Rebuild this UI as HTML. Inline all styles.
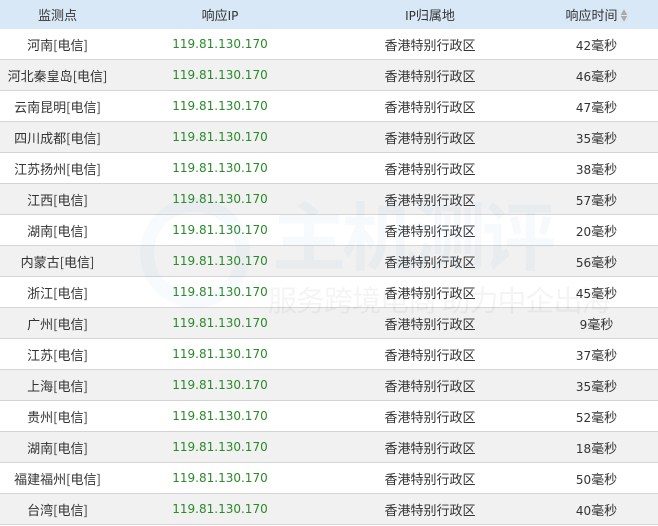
<!DOCTYPE html><html><head><meta charset="utf-8"><style>
body{margin:0;width:658px;height:526px;overflow:hidden;background:#fff;font-family:"Noto Sans CJK SC",sans-serif;font-size:13px;color:#333;position:relative}
table{border-collapse:collapse;width:658px;table-layout:fixed}
th{background:#d9e8f7;height:29px;font-weight:normal;color:#333;padding:0}
td{height:30px;border-bottom:1px solid #d4d4d4;text-align:center;padding:0}
tr:nth-child(even) td{background:#f1f1f1}
td.ip{color:#2a8a2a;font-family:"DejaVu Sans",sans-serif;font-size:12px}
.n{font-family:"DejaVu Sans",sans-serif;font-size:12px}
.wm{position:absolute;pointer-events:none}
</style></head><body>
<table>
<colgroup><col style="width:115px"><col style="width:210px"><col style="width:210px"><col style="width:123px"></colgroup>
<thead><tr><th>监测点</th><th>响应<span class="n">IP</span></th><th><span class="n">IP</span>归属地</th><th>响应时间 <span style="color:#aaa;font-size:7px;display:inline-block;line-height:6px;vertical-align:middle">&#9650;<br>&#9660;</span></th></tr></thead>
<tbody>
<tr><td>河南[电信]</td><td class="ip">119.81.130.170</td><td>香港特别行政区</td><td><span class="n">42</span>毫秒</td></tr>
<tr><td>河北秦皇岛[电信]</td><td class="ip">119.81.130.170</td><td>香港特别行政区</td><td><span class="n">46</span>毫秒</td></tr>
<tr><td>云南昆明[电信]</td><td class="ip">119.81.130.170</td><td>香港特别行政区</td><td><span class="n">47</span>毫秒</td></tr>
<tr><td>四川成都[电信]</td><td class="ip">119.81.130.170</td><td>香港特别行政区</td><td><span class="n">35</span>毫秒</td></tr>
<tr><td>江苏扬州[电信]</td><td class="ip">119.81.130.170</td><td>香港特别行政区</td><td><span class="n">38</span>毫秒</td></tr>
<tr><td>江西[电信]</td><td class="ip">119.81.130.170</td><td>香港特别行政区</td><td><span class="n">57</span>毫秒</td></tr>
<tr><td>湖南[电信]</td><td class="ip">119.81.130.170</td><td>香港特别行政区</td><td><span class="n">20</span>毫秒</td></tr>
<tr><td>内蒙古[电信]</td><td class="ip">119.81.130.170</td><td>香港特别行政区</td><td><span class="n">56</span>毫秒</td></tr>
<tr><td>浙江[电信]</td><td class="ip">119.81.130.170</td><td>香港特别行政区</td><td><span class="n">45</span>毫秒</td></tr>
<tr><td>广州[电信]</td><td class="ip">119.81.130.170</td><td>香港特别行政区</td><td><span class="n">9</span>毫秒</td></tr>
<tr><td>江苏[电信]</td><td class="ip">119.81.130.170</td><td>香港特别行政区</td><td><span class="n">37</span>毫秒</td></tr>
<tr><td>上海[电信]</td><td class="ip">119.81.130.170</td><td>香港特别行政区</td><td><span class="n">35</span>毫秒</td></tr>
<tr><td>贵州[电信]</td><td class="ip">119.81.130.170</td><td>香港特别行政区</td><td><span class="n">52</span>毫秒</td></tr>
<tr><td>湖南[电信]</td><td class="ip">119.81.130.170</td><td>香港特别行政区</td><td><span class="n">18</span>毫秒</td></tr>
<tr><td>福建福州[电信]</td><td class="ip">119.81.130.170</td><td>香港特别行政区</td><td><span class="n">50</span>毫秒</td></tr>
<tr><td>台湾[电信]</td><td class="ip">119.81.130.170</td><td>香港特别行政区</td><td><span class="n">40</span>毫秒</td></tr>
</tbody></table>
<div class="wm" style="left:140px;top:198px;width:110px;height:110px;border-radius:50%;border:14px solid rgba(120,170,220,0.05);box-sizing:border-box"></div>
<div class="wm" style="left:272px;top:196px;font-size:74px;font-weight:bold;color:rgba(100,160,220,0.05);letter-spacing:-4px;line-height:1">主机测评</div>
<div class="wm" style="left:268px;top:285px;font-size:29px;color:rgba(0,0,0,0.045);line-height:1;letter-spacing:-1px">服务跨境电商 助力中企出海</div>
</body></html>
